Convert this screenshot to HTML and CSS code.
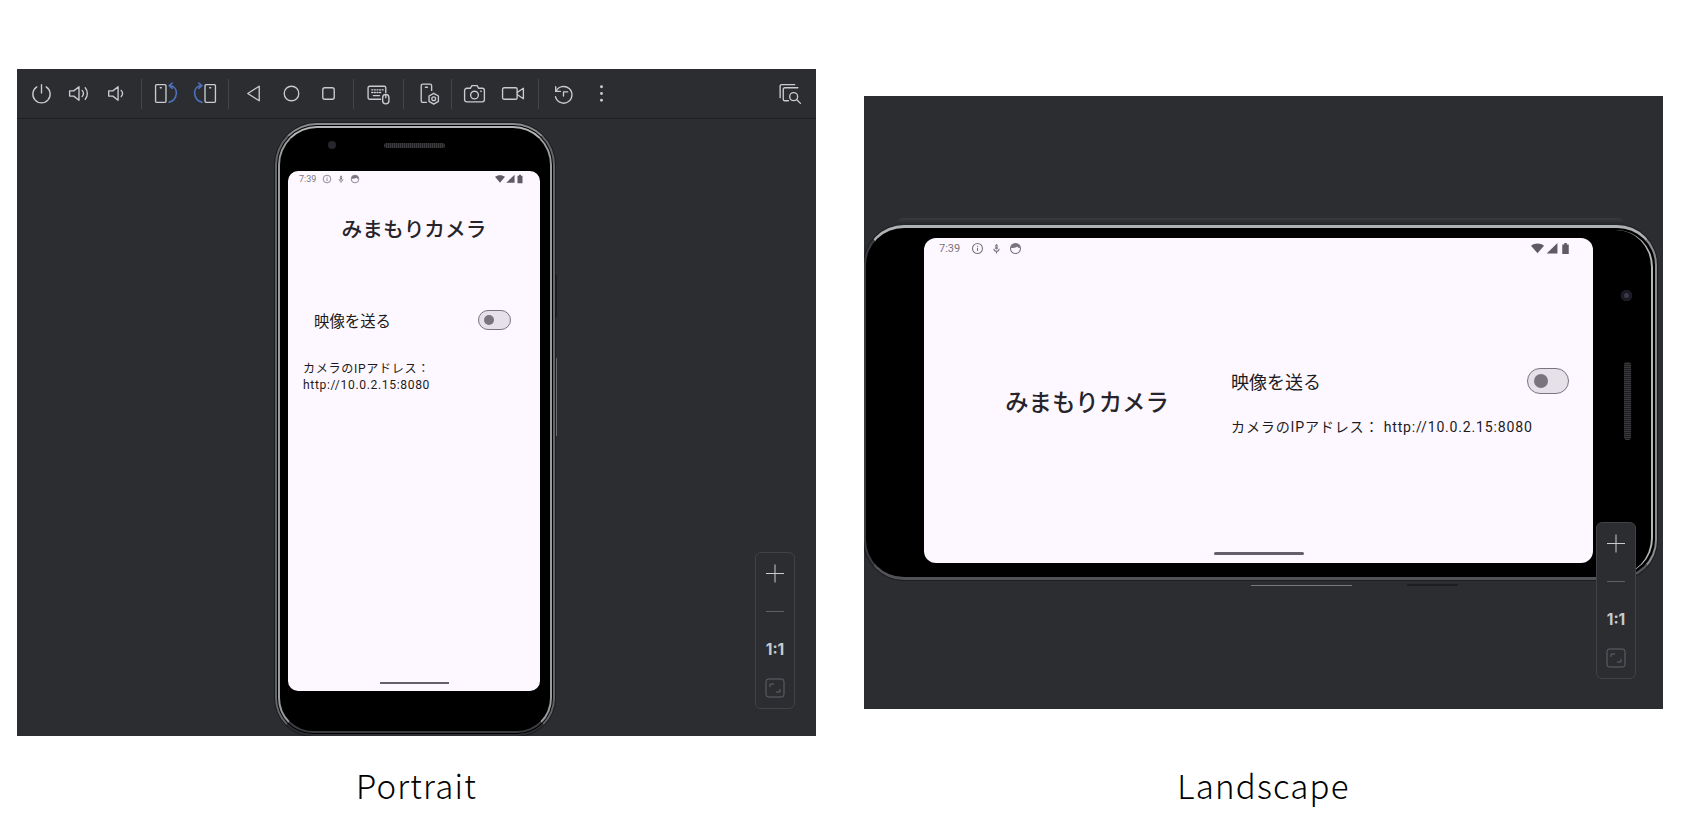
FILE: index.html
```html
<!doctype html>
<html>
<head>
<meta charset="utf-8">
<meta name="viewport" content="width=device-width, initial-scale=1.0">
<link rel="stylesheet" href="styles.css">
<title>Portrait / Landscape</title>
</head>
<body>
<svg class="defs" width="0" height="0">
  <defs>
    <symbol id="s-info" viewBox="0 0 12 12"><circle cx="6" cy="6" r="4.6" fill="none" stroke="currentColor" stroke-width="1"/><path d="M6 5.2v3.2M6 3.4v1" stroke="currentColor" stroke-width="1"/></symbol>
    <symbol id="s-mic" viewBox="0 0 12 12"><path d="M6 1.500l1.800 2.600H4.200z" fill="currentColor"/><path d="M3.600 6.200a2.400 2.400 0 0 0 4.800 0M6 8.600v2" fill="none" stroke="currentColor" stroke-width="1"/><circle cx="6" cy="5.600" r="1.300" fill="currentColor"/></symbol>
    <symbol id="s-face" viewBox="0 0 12 12"><circle cx="6" cy="6" r="4.600" fill="none" stroke="currentColor" stroke-width="1"/><path d="M1.800 5.600a4.200 4.200 0 0 1 8.400 0c-1.400 0-2-.5-2.600-1.200-.9.9-3.800 1.200-5.800 1.200z" fill="currentColor"/></symbol>
    <symbol id="s-wifi" viewBox="0 0 12 12"><path d="M0 3.400C3.300.8 8.700.8 12 3.400L6 10.400z" fill="currentColor"/></symbol>
    <symbol id="s-signal" viewBox="0 0 12 12"><path d="M11.500 1V10.500H1.500z" fill="currentColor"/></symbol>
    <symbol id="s-battery" viewBox="0 0 12 12"><path d="M3 2.200H4.800V1h2.400v1.200H9V11H3z" fill="currentColor"/></symbol>
    <symbol id="s-frame" viewBox="0 0 20 20"><rect x="1" y="1" width="18" height="18" rx="2.500" fill="none" stroke="currentColor"/><path d="M5 9V6h4M15 11v3h-4" fill="none" stroke="currentColor"/></symbol>
  </defs>
</svg>

<main class="figures">

  <figure class="figure">
    <div class="panel panel-portrait">
      <div class="toolbar">
        <span class="tool"><svg viewBox="0 0 24 24"><path d="M12 3.500v8"/><path d="M7.500 5.700a8.300 8.300 0 1 0 9 0"/></svg></span>
        <span class="tool"><svg viewBox="0 0 24 24"><path d="M2.500 9.500h4l5-4v13l-5-4h-4z"/><path d="M14.500 9a4.500 4.500 0 0 1 0 6M17.500 6.500a8.500 8.500 0 0 1 0 11"/></svg></span>
        <span class="tool"><svg viewBox="0 0 24 24"><path d="M4.500 9.500h4l5-4v13l-5-4h-4z"/><path d="M16.500 9a4.500 4.500 0 0 1 0 6"/></svg></span>
        <i class="sep"></i>
        <span class="tool"><svg viewBox="0 0 24 24"><rect x="1.500" y="3.500" width="10" height="17" rx="1"/><path d="M6 6.500h1"/><path class="blue" d="M14.500 4.500L17.500 2M14.500 4.500L17.500 7M14.500 4.500H16C24 6 23 18 14.500 20.500"/></svg></span>
        <span class="tool"><svg viewBox="0 0 24 24"><rect x="12.500" y="3.500" width="10" height="17" rx="1"/><path d="M17 6.500h1"/><path class="blue" d="M9.500 4.500L6.500 2M9.500 4.500L6.500 7M9.500 4.500H8C0 6 1 18 9.500 20.500"/></svg></span>
        <i class="sep"></i>
        <span class="tool"><svg viewBox="0 0 24 24"><path d="M17.500 5L6.500 12l11 7z"/></svg></span>
        <span class="tool"><svg viewBox="0 0 24 24"><circle cx="12" cy="12" r="7"/></svg></span>
        <span class="tool"><svg viewBox="0 0 24 24"><rect x="6.500" y="6.500" width="11" height="11" rx="2"/></svg></span>
        <i class="sep"></i>
        <span class="tool"><svg viewBox="0 0 24 24"><path d="M14 17.500H3.500a1.500 1.500 0 0 1-1.500-1.500V6.500A1.500 1.500 0 0 1 3.500 5h14A1.500 1.500 0 0 1 19 6.500V11"/><path d="M5.500 8.500h1M8 8.500h1M10.500 8.500h1M13 8.500h1M15.500 8.500h1M5.500 11h1M8 11h1M10.500 11h1M13 11h1M7 14h6"/><rect x="16" y="13" width="6" height="9" rx="3"/><path d="M19 13v3"/></svg></span>
        <i class="sep"></i>
        <span class="tool"><svg viewBox="0 0 24 24"><path d="M10 20.500H6.500A1.500 1.500 0 0 1 5 19V4.500A1.500 1.500 0 0 1 6.500 3h7A1.500 1.500 0 0 1 15 4.500V9"/><path d="M9 6h2"/><circle cx="17" cy="17" r="1.800"/><path d="M17 11.800l4.500 2.600v5.200L17 22.200l-4.500-2.600v-5.200z"/></svg></span>
        <i class="sep sep-tight"></i>
        <span class="tool"><svg viewBox="0 0 24 24"><path d="M5 7h3l1.500-2.500h5L16 7h3.500A2 2 0 0 1 21.500 9v9a2 2 0 0 1-2 2h-15a2 2 0 0 1-2-2V9a2 2 0 0 1 2-2z"/><circle cx="12" cy="13.500" r="3.700"/><path d="M18 9.800h.5"/></svg></span>
        <span class="tool tool-wide"><svg viewBox="0 0 24 24"><rect x="1.500" y="6.500" width="14" height="11" rx="1.500"/><path d="M15.500 11l6-4v10l-6-4"/></svg></span>
        <i class="sep"></i>
        <span class="tool"><svg viewBox="0 0 24 24"><path d="M4.500 5.500v4.500h4.500"/><path d="M4.800 10a8 8 0 1 1-.5 5"/><path d="M12 14.500v-4h4"/></svg></span>
        <span class="tool"><svg viewBox="0 0 24 24"><circle class="dot" cx="12" cy="5.500" r="1.400"/><circle class="dot" cx="12" cy="12" r="1.400"/><circle class="dot" cx="12" cy="18.500" r="1.400"/></svg></span>
        <span class="tool tool-end"><svg viewBox="0 0 24 24"><path d="M17 3.500H4.500A1.500 1.500 0 0 0 3 5v11"/><path d="M20 6.500H7.500A1.500 1.500 0 0 0 6 8v9.500A1.500 1.500 0 0 0 7.500 19H11"/><circle cx="16" cy="15" r="3.800"/><path d="M19 18l3.500 3.500"/></svg></span>
      </div>
      <div class="stage">
        <div class="phone phone-portrait">
          <div class="cam"></div>
          <div class="speaker"></div>
          <i class="side-key side-dark"></i>
          <i class="side-key side-line"></i>
          <div class="screen">
            <div class="status">
              <span class="time">7:39</span>
              <svg class="st st-first"><use href="#s-info"/></svg>
              <svg class="st"><use href="#s-mic"/></svg>
              <svg class="st"><use href="#s-face"/></svg>
              <span class="status-gap"></span>
              <svg class="st st-r"><use href="#s-wifi"/></svg>
              <svg class="st st-r"><use href="#s-signal"/></svg>
              <svg class="st st-r"><use href="#s-battery"/></svg>
            </div>
            <h1 class="app-title">みまもりカメラ</h1>
            <div class="row">
              <span class="row-label">映像を送る</span>
              <span class="switch"><i></i></span>
            </div>
            <p class="ip">カメラのIPアドレス：<br>http://10.0.2.15:8080</p>
            <div class="home-bar"></div>
          </div>
        </div>
      </div>
      <div class="zoombox">
        <span class="zb zb-plus"></span>
        <span class="zb zb-minus"></span>
        <span class="zb zb-one">1:1</span>
        <span class="zb"><svg class="zb-frame"><use href="#s-frame"/></svg></span>
      </div>
    </div>
    <figcaption class="caption">Portrait</figcaption>
  </figure>

  <figure class="figure">
    <div class="panel panel-landscape">
      <div class="phone phone-landscape">
        <div class="cam"></div>
        <div class="speaker"></div>
        <i class="side-key key-top"></i>
        <i class="side-key key-bottom"></i>
        <i class="side-key key-bottom2"></i>
        <div class="screen">
          <div class="status">
            <span class="time">7:39</span>
            <svg class="st st-first"><use href="#s-info"/></svg>
            <svg class="st"><use href="#s-mic"/></svg>
            <svg class="st"><use href="#s-face"/></svg>
            <span class="status-gap"></span>
            <svg class="st st-r"><use href="#s-wifi"/></svg>
            <svg class="st st-r"><use href="#s-signal"/></svg>
            <svg class="st st-r"><use href="#s-battery"/></svg>
          </div>
          <div class="ls-body">
            <h1 class="app-title">みまもりカメラ</h1>
            <div class="ls-side">
              <div class="row">
                <span class="row-label">映像を送る</span>
                <span class="switch"><i></i></span>
              </div>
              <p class="ip">カメラのIPアドレス： http://10.0.2.15:8080</p>
            </div>
          </div>
          <div class="home-bar"></div>
        </div>
      </div>
      <div class="zoombox">
        <span class="zb zb-plus"></span>
        <span class="zb zb-minus"></span>
        <span class="zb zb-one">1:1</span>
        <span class="zb"><svg class="zb-frame"><use href="#s-frame"/></svg></span>
      </div>
    </div>
    <figcaption class="caption">Landscape</figcaption>
  </figure>

</main>
</body>
</html>
```

FILE: styles.css
```css
html, body {
    margin: 0;
    padding: 0;
    background: #fff;
}
body {
    font-family: "Noto Sans CJK JP", Roboto, sans-serif;
    overflow: hidden;
}
h1, p, figure {
    margin: 0;
    padding: 0;
}
.defs {
    position: absolute;
}

.figures {
    display: flex;
    gap: 48px;
    height: 823px;
    padding-left: 17px;
}
.figure {
    display: flex;
    flex-direction: column;
    width: 799px;
}
.caption {
    margin-top: auto;
    height: 60px;
    font-family: "Noto Sans CJK JP", "Noto Sans", sans-serif;
    font-size: 33px;
    font-weight: 300;
    line-height: 44px;
    letter-spacing: 1.2px;
    text-align: center;
    color: #000;
}

.panel {
    position: relative;
    display: flex;
    overflow: hidden;
    background: #2b2d30;
}
.panel-portrait {
    flex-direction: column;
    height: 667px;
    margin-top: 69px;
}
.panel-landscape {
    align-items: flex-start;
    height: 613px;
    margin-top: 96px;
    padding-top: 129px;
    box-sizing: border-box;
}

/* toolbar */
.toolbar {
    display: flex;
    align-items: center;
    flex: none;
    height: 49px;
    padding-left: 6px;
    border-bottom: 1px solid #1e1f22;
}
.tool {
    display: flex;
    justify-content: center;
    width: 37.6px;
}
.tool svg {
    width: 25px;
    height: 25px;
    fill: none;
    stroke: #c9cbd0;
    stroke-width: 1.3;
    stroke-linecap: round;
    stroke-linejoin: round;
}
.tool svg .blue {
    stroke: #4d72bd;
    stroke-width: 1.500;
}
.tool svg .dot {
    fill: #c9cbd0;
    stroke: none;
}
.tool-wide {
    margin-left: 2px;
}
.tool-end {
    margin-left: auto;
    margin-right: 8px;
}
.sep {
    width: 1px;
    height: 30px;
    margin: 0 5.5px;
    background: #43454a;
}
.sep-tight {
    margin: 0 3.8px;
}

.stage {
    display: flex;
    justify-content: center;
    flex: 1;
    padding: 4px 3px 0 0;
    min-height: 0;
}

/* phone body */
.phone {
    position: relative;
    flex: none;
    box-sizing: border-box;
    display: flex;
    background: #000;
    border: 2px solid #646568;
    box-shadow: 0 0 0 1px #1c1d1f;
}
.phone::before {
    content: "";
    position: absolute;
    border-style: solid;
    pointer-events: none;
}
.phone-portrait {
    width: 280px;
    height: 613px;
    padding: 46px 13px 43px 11px;
    border-radius: 42px 42px 38px 38px;
    border-top-color: #8a8b8e;
    border-bottom-color: #2d2e31;
}
.phone-portrait::before {
    inset: 1px;
    border-width: 2px;
    border-color: #b4b5b7 #9a9b9e #3c3d40;
    border-radius: 39px 39px 35px 35px;
}
.phone-landscape {
    width: 793px;
    height: 355px;
    padding: 10px 62px 14px 58px;
    border-width: 3px 2px 3px 2px;
    border-radius: 40px;
    border-color: #b0b1b3 #8a8b8e #525356 #3a3b3e;
}
.phone-landscape::before {
    inset: 2px;
    border-width: 0 2px 0 0;
    border-color: transparent #b5b6b8 transparent transparent;
    border-radius: 37px;
}
.cam {
    position: absolute;
    border-radius: 50%;
    background: #26262c;
}
.speaker {
    position: absolute;
    border-radius: 3px;
}
.phone-portrait .cam {
    left: 51px;
    top: 16px;
    width: 8px;
    height: 8px;
}
.phone-portrait .speaker {
    left: 107px;
    top: 18px;
    width: 61px;
    height: 5px;
    background: repeating-linear-gradient(90deg, #3a3a3c 0 1px, #222224 1px 2px);
}
.phone-landscape .cam {
    right: 23px;
    top: 62px;
    width: 11px;
    height: 11px;
    background: #3a3a4c;
    box-shadow: inset 0 0 0 3px #1a1a22;
}
.phone-landscape .speaker {
    right: 24px;
    top: 134px;
    width: 7px;
    height: 78px;
    background: repeating-linear-gradient(0deg, #3a3a3c 0 1px, #1d1d1f 1px 2px);
}
.side-key {
    position: absolute;
}
.side-dark {
    right: -4px;
    top: 150px;
    width: 2px;
    height: 42px;
    background: #1b1c1e;
}
.side-line {
    right: -4px;
    top: 233px;
    width: 1px;
    height: 78px;
    background: #6c6d70;
}
.key-top {
    left: 30px;
    right: 30px;
    top: -10px;
    height: 7px;
    border-radius: 30px 30px 0 0;
    background: linear-gradient(#3a3b3e, #242528);
}
.key-bottom {
    left: 385px;
    bottom: -9px;
    width: 101px;
    height: 1px;
    background: #77787b;
}
.key-bottom2 {
    left: 541px;
    bottom: -9px;
    width: 51px;
    height: 2px;
    background: #1d1e20;
}

/* app screen */
.screen {
    display: flex;
    flex-direction: column;
    flex: 1;
    min-width: 0;
    background: #fdf8ff;
    color: #1d1b20;
}
.phone-portrait .screen {
    border-radius: 10px;
}
.phone-landscape .screen {
    border-radius: 12px;
}
.status {
    display: flex;
    align-items: center;
    flex: none;
    color: #79757e;
    font-family: Roboto, sans-serif;
}
.status-gap {
    flex: 1;
}
.status .st-r {
    color: #5f5b65;
}
.phone-portrait .status {
    height: 16px;
    padding: 0 15px 0 11px;
    gap: 4px;
}
.phone-portrait .time {
    font-size: 9px;
    width: 16px;
}
.phone-portrait .st {
    width: 10px;
    height: 10px;
}
.phone-portrait .st-first {
    margin-left: 3px;
}
.phone-portrait .st-r {
    margin-left: -4px;
}
.phone-landscape .status {
    height: 20px;
    padding: 0 21px 0 15px;
    gap: 6px;
}
.phone-landscape .time {
    font-size: 11px;
    width: 21px;
}
.phone-landscape .st {
    width: 13px;
    height: 13px;
}
.phone-landscape .st-first {
    margin-left: 5px;
}
.phone-landscape .st-r {
    margin-left: -5px;
}

.app-title {
    font-weight: 500;
    color: #26242a;
    text-align: center;
    white-space: nowrap;
}
.phone-portrait .app-title {
    margin-top: 26px;
    font-size: 20.7px;
    line-height: 30px;
}
.row {
    display: flex;
    align-items: center;
    justify-content: space-between;
}
.phone-portrait .row {
    height: 20px;
    margin-top: 67px;
    padding: 0 29px 0 26px;
}
.row-label {
    white-space: nowrap;
}
.phone-portrait .row-label {
    font-size: 15.4px;
}
.switch {
    display: flex;
    align-items: center;
    flex: none;
    box-sizing: border-box;
    background: #e6e0e9;
    border: 1.5px solid #79747e;
    border-radius: 14px;
}
.switch i {
    display: block;
    border-radius: 50%;
    background: #79747e;
}
.phone-portrait .switch {
    width: 33px;
    height: 20px;
    padding-left: 5px;
}
.phone-portrait .switch i {
    width: 10px;
    height: 10px;
}
.ip {
    font-family: Roboto, "Noto Sans CJK JP", sans-serif;
    white-space: nowrap;
}
.phone-portrait .ip {
    margin-top: 32px;
    padding-left: 15px;
    font-size: 12.1px;
    line-height: 15.5px;
    letter-spacing: .65px;
}
.home-bar {
    flex: none;
    align-self: center;
    margin-top: auto;
    background: #655e6b;
}
.phone-portrait .home-bar {
    width: 69px;
    height: 2px;
    margin-bottom: 7px;
}
.phone-landscape .home-bar {
    width: 90px;
    height: 3px;
    margin-top: 9px;
    margin-bottom: 8px;
    border-radius: 2px;
}

/* landscape layout of the app */
.ls-body {
    display: flex;
    flex: 1;
    min-height: 0;
}
.ls-body .app-title {
    flex: none;
    align-self: center;
    box-sizing: border-box;
    width: 307px;
    padding-left: 19px;
    font-size: 23.4px;
    line-height: 34px;
}
.ls-side {
    flex: 1;
    padding: 110px 24px 0 0;
}
.phone-landscape .row {
    height: 26px;
}
.phone-landscape .row-label {
    font-size: 18px;
}
.phone-landscape .switch {
    width: 42px;
    height: 26px;
    padding-left: 6px;
}
.phone-landscape .switch i {
    width: 14px;
    height: 14px;
}
.phone-landscape .ip {
    margin-top: 21px;
    font-size: 14.1px;
    line-height: 24px;
    letter-spacing: .8px;
}

/* zoom control */
.zoombox {
    position: absolute;
    display: flex;
    flex-direction: column;
    box-sizing: border-box;
    width: 40px;
    height: 157px;
    padding: 1px 0;
    border: 1px solid #404246;
    border-radius: 6px;
    background: #2b2d30;
}
.panel-portrait .zoombox {
    right: 21px;
    bottom: 27px;
}
.panel-landscape .zoombox {
    right: 27px;
    bottom: 30px;
}
.zb {
    position: relative;
    display: flex;
    align-items: center;
    justify-content: center;
    flex: 1;
    color: #c9cbd0;
}
.zb-plus::before,
.zb-plus::after,
.zb-minus::before {
    content: "";
    position: absolute;
    left: 10px;
    top: 50%;
    width: 18px;
    height: 1px;
    background: #c9cbd0;
}
.zb-plus::after {
    transform: rotate(90deg);
}
.zb-minus::before {
    background: #5e6065;
}
.zb-one {
    font-family: Inter, "Liberation Sans", sans-serif;
    font-size: 15.5px;
    font-weight: 700;
}
.zb-frame {
    width: 20px;
    height: 20px;
    color: #63656a;
}
```
